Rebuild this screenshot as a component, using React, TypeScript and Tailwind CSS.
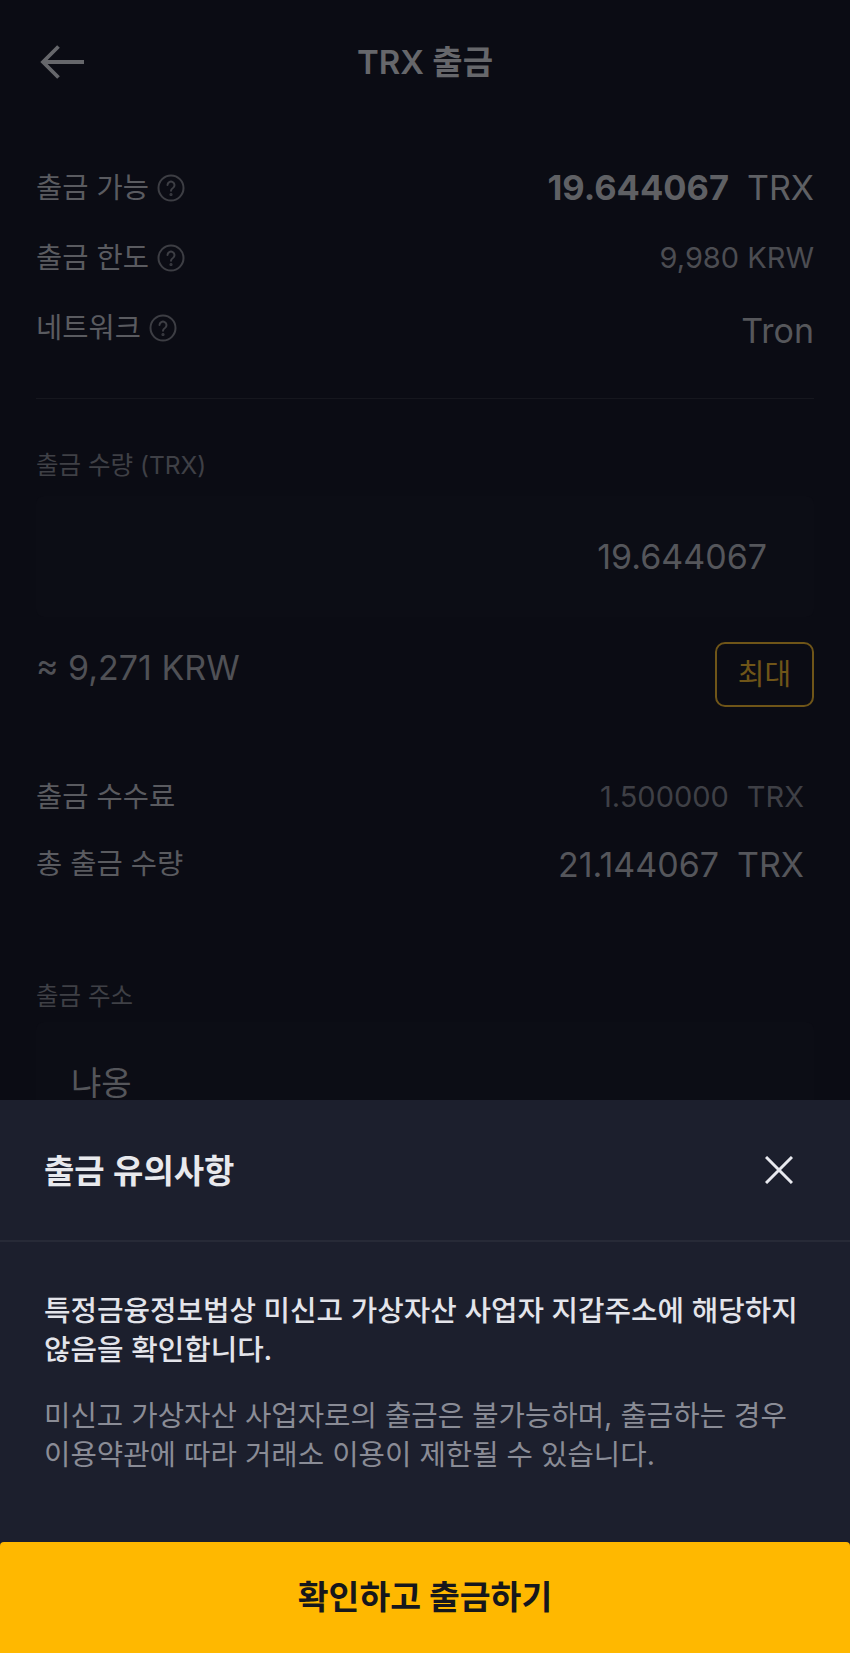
const font = 'font-["Inter","Noto_Sans_CJK_KR",sans-serif]';

function Help() {
  return (
    <svg viewBox="0 0 28 28" className="h-[28px] w-[28px] shrink-0 text-[#3d3e44]" fill="none" stroke="currentColor" strokeWidth="2">
      <circle cx="14" cy="14" r="12.5" />
      <path d="M10.5 11a3.5 3.5 0 1 1 5.4 3c-1.3.8-1.9 1.4-1.9 2.8" strokeLinecap="round" />
      <circle cx="14" cy="20.5" r="0.6" fill="currentColor" />
    </svg>
  );
}

function InfoRow({label, children}: {label: string; children: React.ReactNode}) {
  return (
    <div className="flex h-[70px] items-center justify-between">
      <div className="flex items-center gap-[8px] text-[28.5px] text-[#5a5b60]">
        {label}
        <Help />
      </div>
      {children}
    </div>
  );
}

export default function App() {
  return (
    <div className={`relative h-[1653px] w-[850px] overflow-hidden bg-[#0b0c14] ${font}`}>
      <header className="relative flex h-[126px] items-center justify-center">
        <svg viewBox="0 0 44 34" className="absolute left-[40px] top-[45px] h-[34px] w-[44px] text-[#66676b]" fill="none" stroke="currentColor" strokeWidth="3.8">
          <path d="M44 17H3M18.5 1.5L3 17l15.5 15.5" />
        </svg>
        <h1 className="text-[33px] font-semibold text-[#66676b]">TRX 출금</h1>
      </header>

      <div className="px-[36px]">
        <section className="border-b border-[#16171e] pt-[27px] pb-[35px]">
          <InfoRow label="출금 가능">
            <div className="text-[34px] text-[#5f6064]">
              <span className="text-[34.5px] font-bold">19.644067</span>
              <span className="ml-[18px]">TRX</span>
            </div>
          </InfoRow>
          <InfoRow label="출금 한도">
            <span className="text-[29px] text-[#4c4d52]">9,980 KRW</span>
          </InfoRow>
          <InfoRow label="네트워크">
            <span className="mt-[4px] text-[34px] text-[#56575b]">Tron</span>
          </InfoRow>
        </section>

        <section className="pt-[48px]">
          <p className="text-[24.5px] leading-[36px] text-[#3f4046]">출금 수량 (TRX)</p>
          <div className="mt-[13px] flex h-[121px] items-center justify-end rounded-[8px] bg-[#0c0d15] pr-[47px] text-[34px] text-[#55565b]">
            19.644067
          </div>
          <div className="mt-[25px] flex items-start justify-between">
            <span className="text-[34px] text-[#505156]">≈ 9,271 KRW</span>
            <button className="h-[65px] w-[99px] rounded-[10px] border-[2.5px] border-[#6f5518] text-[29px] text-[#6f5518]">최대</button>
          </div>
        </section>

        <section className="pt-[55px]">
          <div className="flex h-[70px] items-center justify-between pr-[10px]">
            <span className="text-[28.5px] text-[#5a5b60]">출금 수수료</span>
            <span className="text-[29px] text-[#3f4046]">1.500000<span className="ml-[18px]">TRX</span></span>
          </div>
          <div className="flex h-[64px] items-center justify-between pr-[10px]">
            <span className="text-[28.5px] text-[#5a5b60]">총 출금 수량</span>
            <span className="text-[34px] text-[#55565b]">21.144067<span className="ml-[18px]">TRX</span></span>
          </div>
        </section>

        <section className="pt-[82px]">
          <p className="text-[24.5px] leading-[36px] text-[#3f4046]">출금 주소</p>
          <div className="mt-[8px] h-[120px] rounded-[8px] bg-[#0c0d15] pl-[35px] pt-[37px] text-[33px] text-[#55565b]">냐옹</div>
        </section>
      </div>

      <div className="absolute inset-x-0 bottom-0 flex h-[553px] flex-col bg-[#1c1f2d]">
        <div className="flex h-[142px] items-center justify-between border-b-2 border-[#272a37] pl-[44px] pr-[57px]">
          <h2 className="mt-[3px] text-[33px] font-semibold text-[#e8e9ed]">출금 유의사항</h2>
          <svg viewBox="0 0 28 28" className="h-[28px] w-[28px] text-[#e8e9ef]" fill="none" stroke="currentColor" strokeWidth="3">
            <path d="M1 1l26 26M27 1L1 27" />
          </svg>
        </div>
        <div className="flex-1 px-[44px] pt-[49px]">
          <p className="break-keep text-[28.8px] font-medium leading-[39px] text-[#e3e4ea]">
            특정금융정보법상 미신고 가상자산 사업자 지갑주소에 해당하지 않음을 확인합니다.
          </p>
          <p className="mt-[27px] break-keep text-[28.7px] leading-[39px] text-[#8a8c96]">
            미신고 가상자산 사업자로의 출금은 불가능하며, 출금하는 경우 이용약관에 따라 거래소 이용이 제한될 수 있습니다.
          </p>
        </div>
        <button className="h-[111px] rounded-t-[4px] bg-[#ffb800] text-[33.5px] font-bold text-[#16171c]">확인하고 출금하기</button>
      </div>
    </div>
  );
}
